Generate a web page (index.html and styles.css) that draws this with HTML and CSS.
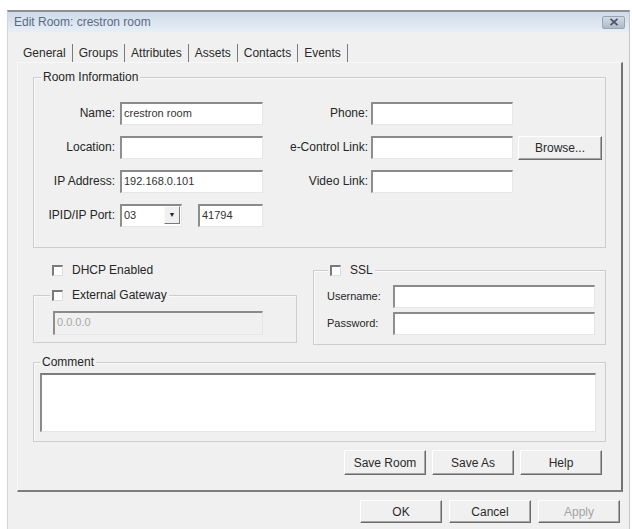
FILE: index.html
```html
<!DOCTYPE html>
<html>
<head>
<meta charset="utf-8">
<title>Edit Room: crestron room</title>
<link rel="stylesheet" href="styles.css">
</head>
<body>
<div class="dialog">
  <div class="titlebar">
    <span class="title">Edit Room: crestron room</span>
    <span class="close"><svg width="10" height="8" viewBox="0 0 10 8"><path d="M1.5 0.8 L8.5 7.2 M8.5 0.8 L1.5 7.2" stroke="#46526a" stroke-width="1.7" fill="none"/></svg></span>
  </div>
  <div class="tabs">
    <span class="tab active">General</span>
    <span class="tab">Groups</span>
    <span class="tab">Attributes</span>
    <span class="tab">Assets</span>
    <span class="tab">Contacts</span>
    <span class="tab">Events</span>
  </div>
  <div class="panel">
    <div class="group room-info">
      <div class="legend">Room Information</div>
      <div class="info-grid">
        <span class="lbl">Name:</span>
        <div class="field">crestron room</div>
        <span class="lbl lbl-r">Phone:</span>
        <div class="field"></div>
        <div></div>

        <span class="lbl">Location:</span>
        <div class="field"></div>
        <span class="lbl lbl-r">e-Control Link:</span>
        <div class="field"></div>
        <div class="btn browse">Browse...</div>

        <span class="lbl">IP Address:</span>
        <div class="field">192.168.0.101</div>
        <span class="lbl lbl-r">Video Link:</span>
        <div class="field"></div>
        <div></div>

        <span class="lbl">IPID/IP Port:</span>
        <div class="ipid">
          <div class="field select"><span class="sel-val">03</span><span class="sel-btn">&#9660;</span></div>
          <div class="field port">41794</div>
        </div>
      </div>
    </div>

    <div class="mid">
      <div class="left-col">
        <div class="check-row"><span class="cb"></span>DHCP Enabled</div>
        <div class="group gateway">
          <div class="legend gw-legend"><span class="cb"></span>External Gateway</div>
          <div class="field disabled gw-input">0.0.0.0</div>
        </div>
      </div>
      <div class="group ssl">
        <div class="legend ssl-legend"><span class="cb"></span>SSL</div>
        <div class="ssl-grid">
          <span class="lbl-s">Username:</span>
          <div class="field"></div>
          <span class="lbl-s">Password:</span>
          <div class="field"></div>
        </div>
      </div>
    </div>

    <div class="group comment">
      <div class="legend cm-legend">Comment</div>
      <div class="textarea"></div>
    </div>

    <div class="btn-row panel-btns">
      <div class="btn">Save Room</div>
      <div class="btn">Save As</div>
      <div class="btn">Help</div>
    </div>
  </div>
  <div class="btn-row dialog-btns">
    <div class="btn">OK</div>
    <div class="btn">Cancel</div>
    <div class="btn disabled-btn">Apply</div>
  </div>
</div>
</body>
</html>
```
FILE: styles.css
```css
* { box-sizing: border-box; }

body {
  margin: 0;
  background: #ffffff;
  font-family: "Liberation Sans", Arial, sans-serif;
  font-size: 12px;
  color: #262626;
}

.dialog {
  margin: 10px 0 0 7px;
  width: 623px;
  height: 519px;
  background: #f0f0f0;
  border-top: 2px solid #8e8e8e;
  border-left: 1px solid #d4d4d4;
  border-right: 1px solid #c4c4c4;
}

.titlebar {
  height: 20px;
  display: flex;
  align-items: center;
  justify-content: space-between;
  padding: 0 4px 0 6px;
  background: linear-gradient(#cfdbea, #e7eef6);
}

.title {
  color: #5b6a86;
  font-size: 12px;
}

.close {
  width: 23px;
  height: 13px;
  display: flex;
  align-items: center;
  justify-content: center;
  border: 1px solid #97a3b6;
  border-radius: 2px;
  background: linear-gradient(#d3dae4, #aeb9c8);
}

.tabs {
  display: flex;
  margin: 12px 0 0 9px;
  height: 18px;
}

.tab {
  padding: 0 6px;
  line-height: 18px;
  border-right: 1px solid #7a7a7a;
  color: #2a2a2a;
}

.panel {
  margin-left: 9px;
  width: 606px;
  height: 430px;
  border-top: 1px solid #f8f8f8;
  border-left: 1px solid #f8f8f8;
  border-right: 2px solid #737373;
  border-bottom: 2px solid #7d7d7d;
  padding: 0 15px;
}

.group {
  border: 1px solid #cdcdcd;
  box-shadow: inset 1px 1px 0 #fafafa;
}

.legend {
  width: fit-content;
  margin: -8px 0 0 7px;
  padding: 0 2px;
  line-height: 14px;
  background: #f0f0f0;
  white-space: nowrap;
  display: flex;
  align-items: center;
}

.room-info { margin-top: 14px; }

.info-grid {
  display: grid;
  grid-template-columns: 86px 143px 108px 142px 89px;
  grid-template-rows: repeat(4, 23px);
  row-gap: 11px;
  margin-top: 18px;
  padding-bottom: 20px;
}

.lbl {
  text-align: right;
  padding-right: 5px;
  line-height: 23px;
  white-space: nowrap;
}

.lbl-r { padding-right: 3px; }

.field {
  background: #ffffff;
  border-top: 2px solid #8a8a8a;
  border-left: 2px solid #8e8e8e;
  border-right: 1px solid #e6e6e6;
  border-bottom: 1px solid #e6e6e6;
  height: 23px;
  font-size: 11px;
  line-height: 19px;
  padding-left: 2px;
  color: #333;
}

.field.disabled {
  background: #f0f0f0;
  color: #a8a8a8;
}

.btn {
  display: flex;
  align-items: center;
  justify-content: center;
  width: 82px;
  height: 25px;
  background: #f0f0f0;
  border: 1px solid;
  border-color: #ffffff #6c6c6c #6c6c6c #ffffff;
  box-shadow: inset -1px -1px 0 #a6a6a6;
  color: #2a2a2a;
  font-size: 12px;
}

.browse {
  justify-self: end;
  width: 84px;
  height: 24px;
}

.ipid {
  display: flex;
  gap: 16px;
}

.select {
  width: 62px;
  display: flex;
  justify-content: space-between;
  padding-right: 1px;
}

.sel-btn {
  width: 16px;
  height: 18px;
  margin-top: 0;
  font-size: 7px;
  line-height: 16px;
  text-align: center;
  color: #222;
  border: 1px solid;
  border-color: #fafafa #7a7a7a #7a7a7a #fafafa;
  background: #f0f0f0;
}

.port { width: 65px; }

.mid {
  display: flex;
  gap: 16px;
  margin-top: 15px;
}

.left-col { width: 264px; }

.check-row {
  display: flex;
  align-items: center;
  line-height: 14px;
  padding-left: 19px;
}

.cb {
  width: 11px;
  height: 11px;
  background: #ffffff;
  border-top: 2px solid #7a7a7a;
  border-left: 2px solid #7a7a7a;
  border-right: 1px solid #dedede;
  border-bottom: 1px solid #dedede;
  margin-right: 9px;
  flex: none;
}

.gateway {
  margin-top: 18px;
  padding-bottom: 7px;
}

.gw-legend { margin-left: 16px; }

.gw-input {
  margin: 9px 0 0 19px;
  width: 210px;
  height: 24px;
}

.ssl {
  flex: 1;
  margin-top: 7px;
  padding-bottom: 9px;
}

.ssl-legend { margin-left: 14px; }

.ssl-grid {
  display: grid;
  grid-template-columns: 79px 202px;
  grid-template-rows: 23px 23px;
  row-gap: 4px;
  margin-top: 8px;
}

.lbl-s {
  padding-left: 13px;
  font-size: 11px;
  line-height: 23px;
}

.comment {
  margin-top: 17px;
  padding-bottom: 9px;
}

.cm-legend { margin-left: 6px; }

.textarea {
  margin: 4px 0 0 6px;
  width: 556px;
  height: 59px;
  background: #ffffff;
  border-top: 2px solid #7c7c7c;
  border-left: 2px solid #8a8a8a;
  border-right: 1px solid #e6e6e6;
  border-bottom: 1px solid #e6e6e6;
}

.btn-row {
  display: flex;
  justify-content: flex-end;
}

.panel-btns {
  gap: 6px;
  margin: 8px 4px 0 0;
}

.dialog-btns {
  gap: 7px;
  margin: 8px 9px 0 0;
}

.dialog-btns .btn { height: 23px; }

.disabled-btn { color: #a4a4a4; }
```
